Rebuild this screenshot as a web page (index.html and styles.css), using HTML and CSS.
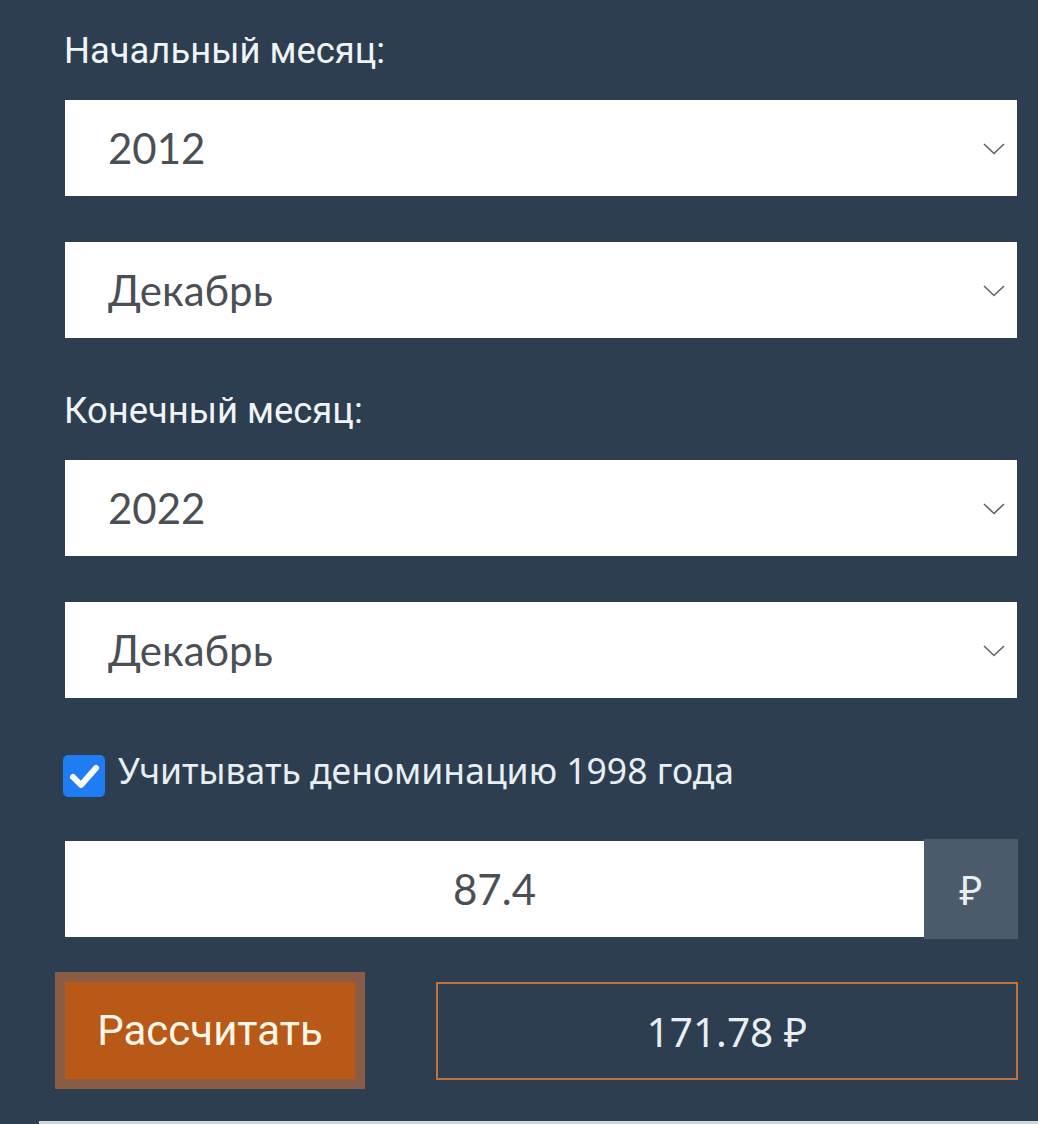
FILE: index.html
```html
<!DOCTYPE html>
<html lang="ru">
<head>
<meta charset="utf-8">
<title>Калькулятор инфляции</title>
<link rel="stylesheet" href="styles.css">
</head>
<body>
<div class="calc">
  <div class="label label-first">Начальный месяц:</div>
  <div class="select-wrap">
    <select class="select"><option>2012</option></select>
    <svg class="chev" viewBox="0 0 22 12" width="22" height="12"><path d="M1 1 L11 10.5 L21 1" fill="none" stroke="#5f6368" stroke-width="1.6"/></svg>
  </div>
  <div class="select-wrap gap">
    <select class="select"><option>Декабрь</option></select>
    <svg class="chev" viewBox="0 0 22 12" width="22" height="12"><path d="M1 1 L11 10.5 L21 1" fill="none" stroke="#5f6368" stroke-width="1.6"/></svg>
  </div>

  <div class="label label-second">Конечный месяц:</div>
  <div class="select-wrap">
    <select class="select"><option>2022</option></select>
    <svg class="chev" viewBox="0 0 22 12" width="22" height="12"><path d="M1 1 L11 10.5 L21 1" fill="none" stroke="#5f6368" stroke-width="1.6"/></svg>
  </div>
  <div class="select-wrap gap">
    <select class="select"><option>Декабрь</option></select>
    <svg class="chev" viewBox="0 0 22 12" width="22" height="12"><path d="M1 1 L11 10.5 L21 1" fill="none" stroke="#5f6368" stroke-width="1.6"/></svg>
  </div>

  <label class="check-row">
    <span class="checkbox">
      <svg viewBox="0 0 42 42" width="42" height="42"><path d="M10 22 L18 30 L33 13" fill="none" stroke="#ffffff" stroke-width="6" stroke-linecap="round" stroke-linejoin="round"/></svg>
    </span>
    <span class="check-text">Учитывать деноминацию 1998 года</span>
  </label>

  <div class="input-group">
    <input class="amount" type="text" value="87.4">
    <div class="addon">₽</div>
  </div>

  <div class="actions">
    <button class="btn">Рассчитать</button>
    <div class="result">171.78 ₽</div>
  </div>
</div>
<div class="footer-line"></div>
</body>
</html>
```

FILE: styles.css
```css
html, body {
  margin: 0;
  padding: 0;
  background: #2c3e50;
}
body {
  width: 1038px;
  height: 1124px;
  overflow: hidden;
}
.calc {
  padding: 29px 0 0 65px;
  width: 952px;
}
.label {
  font-family: Roboto, "Noto Sans", sans-serif;
  font-size: 36.4px;
  line-height: 44px;
  color: #f1f4f6;
  margin-bottom: 27px;
}
.label-first { margin-left: -1px; }
.label-second { margin-top: 51px; margin-left: -1px; }
.select-wrap {
  position: relative;
  height: 96px;
}
.select-wrap.gap { margin-top: 46px; }
.select {
  -webkit-appearance: none;
  appearance: none;
  display: block;
  width: 100%;
  height: 96px;
  border: 0;
  border-radius: 0;
  margin: 0;
  background: #ffffff;
  padding: 0 0 0 43px;
  font-family: Lato, Roboto, sans-serif;
  font-size: 42px;
  color: #4a4f55;
  outline: none;
}
.chev {
  position: absolute;
  right: 12px;
  top: 43px;
  pointer-events: none;
}
.check-row {
  display: flex;
  align-items: center;
  gap: 13px;
  margin-top: 57px;
  margin-left: -2px;
  height: 42px;
}
.checkbox {
  width: 42px;
  height: 42px;
  border-radius: 5px;
  background: #1f7cf2;
  display: block;
  flex: none;
}
.checkbox svg { display: block; }
.check-text {
  font-family: "Noto Sans", "Open Sans", sans-serif;
  font-size: 35.5px;
  line-height: 42px;
  color: #e9eef2;
  position: relative;
  top: -6px;
}
.input-group {
  display: flex;
  align-items: center;
  margin-top: 42px;
  width: 953px;
  height: 100px;
}
.amount {
  flex: 1;
  height: 96px;
  border: 0;
  border-radius: 0;
  margin: 0;
  padding: 0;
  background: #ffffff;
  text-align: center;
  font-family: Lato, Roboto, sans-serif;
  font-size: 42px;
  color: #4a4f55;
  outline: none;
  min-width: 0;
}
.addon {
  width: 94px;
  height: 100px;
  background: #4b5b6b;
  display: flex;
  align-items: center;
  justify-content: center;
  font-family: "Noto Sans", "DejaVu Sans", sans-serif;
  font-size: 40px;
  color: #e9eef2;
}
.actions {
  display: flex;
  align-items: flex-start;
  margin-top: 43px;
  width: 953px;
}
.btn {
  width: 290px;
  height: 97px;
  background: #b95917;
  border: 0;
  border-radius: 0;
  margin: 0;
  padding: 0;
  outline: 10px solid #895c45;
  font-family: Roboto, sans-serif;
  font-size: 42px;
  color: #fff6ea;
  flex: none;
}
.result {
  margin-left: 81px;
  flex: 1;
  height: 94px;
  border: 2px solid #c3723d;
  display: flex;
  align-items: center;
  justify-content: center;
  font-family: "Noto Sans", sans-serif;
  font-size: 40.5px;
  color: #e9eef2;
}
.footer-line {
  position: absolute;
  left: 39px;
  right: 0;
  top: 1121px;
  height: 3px;
  background: #cfd8df;
}
```
